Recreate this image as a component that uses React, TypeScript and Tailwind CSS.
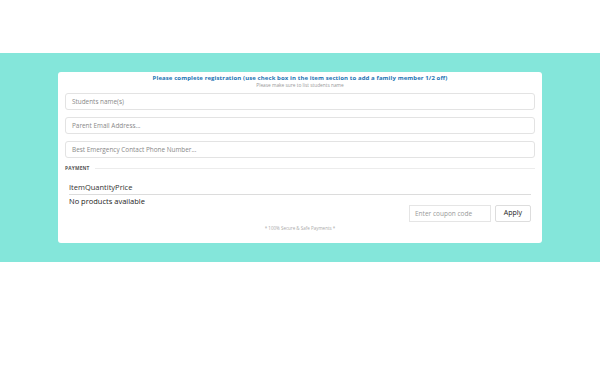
import React from "react";

const font = { fontFamily: '"Open Sans", "Liberation Sans", sans-serif' };

export default function App() {
    return (
        <div className="w-[600px] h-[375px] bg-white" style={font}>
            <div className="h-[53px]" />
            <div className="bg-[#84e6da] h-[209px] pt-[19px] px-[58px]">
                <div className="bg-white rounded-[3px] h-[171px] w-[484px] px-[7px] pt-[2px]">
                    <div className="text-center leading-none">
                        <p className="text-[6px] font-bold text-[#1d74b4] tracking-[0.1px] leading-[8px]">
                            Please complete registration (use check box in the item section to add a family member 1/2 off)
                        </p>
                        <p className="text-[4.8px] text-[#999] leading-[6px]">Please make sure to list students name</p>
                    </div>

                    <div className="mt-[5px] flex flex-col gap-[7px]">
                        <div className="h-[17px] border border-[#e3e3e3] rounded-[3px] px-[6px] flex items-center text-[6.4px] text-[#888]">
                            Students name(s)
                        </div>
                        <div className="h-[17px] border border-[#e3e3e3] rounded-[3px] px-[6px] flex items-center text-[6.4px] text-[#888]">
                            Parent Email Address...
                        </div>
                        <div className="h-[17px] border border-[#e3e3e3] rounded-[3px] px-[6px] flex items-center text-[6.4px] text-[#888]">
                            Best Emergency Contact Phone Number...
                        </div>
                    </div>

                    <div className="mt-[7px] flex items-center gap-[5px]">
                        <span className="text-[4.8px] font-bold text-[#555] tracking-[0.2px]">PAYMENT</span>
                        <div className="flex-1 h-px bg-[#ececec]" />
                    </div>

                    <div className="px-[4px] pr-[4px]">
                        <div className="mt-[10px] text-[7.5px] text-[#333] pb-[2px] border-b border-[#dcdcdc] leading-[10px]">
                            ItemQuantityPrice
                        </div>
                        <div className="text-[7.5px] text-[#222] leading-[10px] mt-[1px]">No products available</div>
                        <div className="flex justify-end gap-[4px] -mt-[1px]">
                            <div className="w-[82px] h-[17px] border border-[#e5e5e5] flex items-center px-[5px] text-[6.5px] text-[#999]">
                                Enter coupon code
                            </div>
                            <div className="w-[36px] h-[17px] border border-[#ddd] rounded-[2px] flex items-center justify-center text-[7px] text-[#222]">
                                Apply
                            </div>
                        </div>
                    </div>
                    <p className="text-center text-[4.5px] text-[#aaa] mt-[3px]">* 100% Secure &amp; Safe Payments *</p>
                </div>
            </div>
        </div>
    );
}
